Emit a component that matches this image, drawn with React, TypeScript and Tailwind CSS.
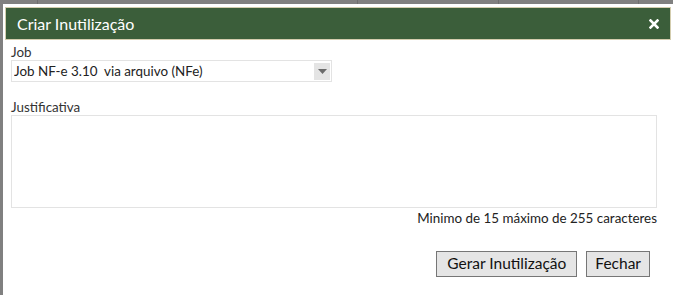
import { useState } from "react";

const FONT = "font-['Segoe_UI','Lato','Open_Sans',sans-serif]";

export default function App() {
  const [job, setJob] = useState("nfe310");
  const [texto, setTexto] = useState("");

  return (
    <div className={`flex h-[295px] w-[673px] flex-col overflow-hidden bg-white text-[#333] ${FONT}`}>
      {/* faixa cinza do fundo */}
      <div className="flex h-[4px] shrink-0 bg-[#808080]">
        <div className="w-[38px] border-r border-[#6e6e6e]" />
        <div className="w-[320px] border-r border-[#6e6e6e]" />
        <div className="w-[141px] border-r border-[#6e6e6e]" />
        <div className="w-[140px] border-r border-[#6e6e6e]" />
      </div>

      <div className="flex flex-1">
        <div className="w-[3px] shrink-0 bg-[#808080]" />

        <div className="flex flex-1 flex-col">
          <div className="ml-[2px] mt-[3px] flex h-[33px] w-[666px] items-center justify-between border border-[#d3cdae] bg-[#3b5e3a] pl-[11px] pr-[11px]">
            <span className="text-[16px] text-white">Criar Inutilização</span>
            <button type="button" className="text-white">
              <svg width="10" height="10" viewBox="0 0 10 10">
                <path d="M1.5 1.5 L8.5 8.5 M8.5 1.5 L1.5 8.5" stroke="white" strokeWidth="2.6" strokeLinecap="square" />
              </svg>
            </button>
          </div>

          <div className="flex flex-col pl-[8px] pr-[14px] pt-[4px] text-[13.4px]">
            <label className="leading-[16px]">Job</label>
            <div className="relative h-[22px] w-[321px] border border-[#e3e3e3] bg-white">
              <select
                value={job}
                onChange={(e) => setJob(e.target.value)}
                className="h-full w-full appearance-none bg-transparent pl-[2px] leading-[20px] text-[#222] outline-none"
              >
                <option value="nfe310">Job NF-e 3.10&nbsp; via arquivo (NFe)</option>
              </select>
              <span className="pointer-events-none absolute right-[1px] top-[2px] flex h-[17px] w-[16px] items-center justify-center bg-[#e4e4e4]">
                <svg width="9" height="5" viewBox="0 0 9 5">
                  <path d="M0 0 H9 L4.5 5 Z" fill="#6b6b6b" />
                </svg>
              </span>
            </div>

            <label className="mt-[17px] leading-[16px]">Justificativa</label>
            <textarea
              value={texto}
              onChange={(e) => setTexto(e.target.value)}
              className="h-[93px] w-[646px] resize-none border border-[#e3e3e3] outline-none"
            />
            <p className="mt-[2px] w-[646px] text-right leading-[16px] text-[#222]">
              Minimo de 15 máximo de 255 caracteres
            </p>

            <div className="mt-[25px] flex w-[639px] justify-end gap-[9px]">
              <button
                type="button"
                className="h-[26px] border border-[#767676] bg-[#e5e5e5] px-[10px] text-[15.5px] text-[#111]"
              >
                Gerar Inutilização
              </button>
              <button
                type="button"
                className="h-[26px] border border-[#767676] bg-[#e5e5e5] px-[8px] text-[15.5px] text-[#111]"
              >
                Fechar
              </button>
            </div>
          </div>
        </div>
      </div>
    </div>
  );
}
